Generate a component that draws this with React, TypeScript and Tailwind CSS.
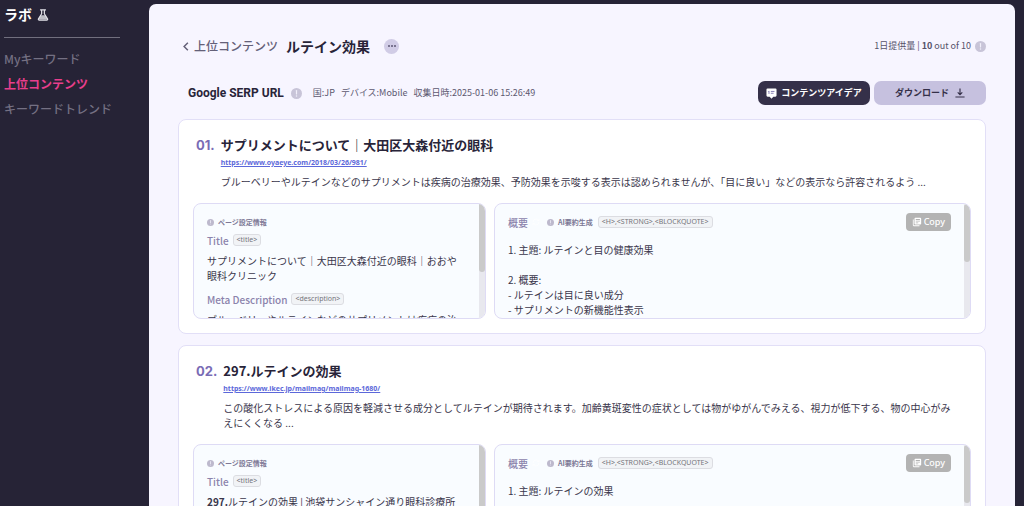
import { LuRefreshCw } from "react-icons/lu";
import { MdLibraryBooks } from "react-icons/md";

type Result = {
  rank: string;
  title: string;
  url: string;
  snippet: string;
  pageTitle: string;
  boldPrefix?: string;
  description: string;
  summary: string;
};

const results: Result[] = [
  {
    rank: "01.",
    title: "サプリメントについて｜大田区大森付近の眼科",
    url: "https://www.oyaeye.com/2018/03/26/981/",
    snippet:
      "ブルーベリーやルテインなどのサプリメントは疾病の治療効果、予防効果を示唆する表示は認められませんが、「目に良い」などの表示なら許容されるよう ...",
    pageTitle: "サプリメントについて｜大田区大森付近の眼科｜おおや眼科クリニック",
    description: "ブルーベリーやルテインなどのサプリメントは疾病の治療効果",
    summary:
      "1. 主題: ルテインと目の健康効果\n\n2. 概要:\n- ルテインは目に良い成分\n- サプリメントの新機能性表示",
  },
  {
    rank: "02.",
    title: "297.ルテインの効果",
    url: "https://www.ikec.jp/mailmag/mailmag-1680/",
    snippet:
      "この酸化ストレスによる原因を軽減させる成分としてルテインが期待されます。加齢黄斑変性の症状としては物がゆがんでみえる、視力が低下する、物の中心がみえにくくなる ...",
    boldPrefix: "297.",
    pageTitle: "ルテインの効果 | 池袋サンシャイン通り眼科診療所",
    description: "この酸化ストレスによる原因を軽減させる成分",
    summary: "1. 主題: ルテインの効果\n\n2. 概要:",
  },
];

function FlaskIcon() {
  return (
    <svg viewBox="0 0 24 24" className="size-3 text-[#e4e3ea]" fill="none" stroke="currentColor" aria-hidden="true">
      <path d="M7 1.8h10M9.300 2v7.500L3 19.500c-.8 1.600 0 2.700 1.600 2.700h14.800c1.600 0 2.400-1.100 1.600-2.700L14.700 9.500V2" strokeWidth="2.400" strokeLinecap="round" strokeLinejoin="round" />
      <path d="M7 12.500h10l4 8.500H3z" fill="currentColor" stroke="none" opacity="0.8" />
    </svg>
  );
}

function NoticeIcon({ className }: { className: string }) {
  return (
    <svg viewBox="0 0 24 24" className={className} aria-hidden="true">
      <circle cx="12" cy="12" r="12" fill="currentColor" />
      <path d="M12 5.500v7.500" stroke="#f1effa" strokeWidth="2.600" strokeLinecap="round" />
      <circle cx="12" cy="17.500" r="1.600" fill="#f1effa" />
    </svg>
  );
}

function IdeaIcon() {
  return (
    <svg viewBox="0 0 24 24" className="size-[11px] shrink-0" aria-hidden="true">
      <path d="M3.500 1h17A2.500 2.500 0 0 1 23 3.500v13a2.500 2.500 0 0 1-2.500 2.500H16l-4 4.500L8 19H3.500A2.500 2.500 0 0 1 1 16.500v-13A2.500 2.500 0 0 1 3.500 1z" fill="#fff" />
      <path d="M5 8l1.500-1.500V13M10.500 7.500h8M10.500 11.500h6" fill="none" stroke="#8078b0" strokeWidth="2" />
    </svg>
  );
}

function DownloadIcon() {
  return (
    <svg viewBox="0 0 24 24" className="size-[10px] shrink-0" fill="none" stroke="currentColor" strokeWidth="2.800" aria-hidden="true">
      <path d="M12 1v15M6.500 10.500l5.500 5.500 5.500-5.500M1 21.500h22" />
    </svg>
  );
}

function Tag({ children }: { children: string }) {
  return (
    <code className="rounded-[3px] border border-[#dcdde2] bg-[#f1f3f6] px-[3px] font-['Noto_Sans',sans-serif] text-[7px] leading-[10px] text-[#75757c]">
      {children}
    </code>
  );
}

function ScrollTrack({ long }: { long?: boolean }) {
  return (
    <div className="w-[6px] shrink-0 bg-[#e8e8ee]" aria-hidden="true">
      <div className={long ? "h-[68px] rounded-b-[3px] bg-[#cacaca]" : "h-[58px] rounded-[3px] bg-[#cacaca]"} />
    </div>
  );
}

function ResultCard({ item }: { item: Result }) {
  return (
    <article className="rounded-[8px] border border-[#e2dff7] bg-white p-[14px]">
      <div className="flex gap-[6px] pr-3 pl-[3px]">
        <span className="font-[Inter,sans-serif] text-[13px] leading-[22px] font-bold text-[#7a6cb5]">{item.rank}</span>
        <div className="min-w-0 flex-1">
          <h2 className="text-[13px] leading-[22px] font-bold text-[#282439]">{item.title}</h2>
          <a href={item.url} className="block w-fit font-['Noto_Sans',sans-serif] text-[7px] leading-[14px] font-bold text-[#5c68da] underline">
            {item.url}
          </a>
          <p className="mt-1 text-[10px] leading-[15px] text-[#3a364b]">{item.snippet}</p>
        </div>
      </div>
      <div className="mt-[14px] grid grid-cols-[293fr_477fr] gap-2">
        <section className="flex h-[116px] overflow-hidden rounded-[8px] border border-[#dedbf5] bg-[#f9fcff]">
          <div className="min-w-0 flex-1 px-[13px] pt-[11px]">
            <div className="flex h-[14px] items-center gap-1 text-[7px] font-bold text-[#7d7896]">
              <NoticeIcon className="size-[7px] text-[#bdb9cd]" />
              ページ設定情報
            </div>
            <div className="mt-[2px] flex h-[18px] items-center gap-1 text-[10px] text-[#8b83ac]">
              <h3 className="font-medium">Title</h3>
              <Tag>{"<title>"}</Tag>
            </div>
            <p className="mt-1 text-[10px] leading-[15px] text-[#3a364b]">
              {item.boldPrefix && <b>{item.boldPrefix}</b>}
              {item.pageTitle}
            </p>
            <div className="mt-[7px] flex h-[18px] items-center gap-1 text-[10px] text-[#8b83ac]">
              <h3 className="font-medium">Meta Description</h3>
              <Tag>{"<description>"}</Tag>
            </div>
            <p className="mt-1 text-[10px] leading-[15px] text-[#3a364b]">{item.description}</p>
          </div>
          <ScrollTrack long />
        </section>
        <section className="flex h-[116px] overflow-hidden rounded-[8px] border border-[#dedbf5] bg-[#f9fcff]">
          <div className="min-w-0 flex-1 px-[13px] pt-[9px]">
            <div className="flex h-[18px] items-center">
              <h3 className="text-[10px] font-medium text-[#8b83ac]">概要</h3>
              <LuRefreshCw className="ml-1 size-2 text-white" aria-hidden="true" />
              <NoticeIcon className="mr-1 ml-[7px] size-[7px] text-[#bdb9cd]" />
              <span className="mr-[5px] text-[7px] font-bold text-[#7d7896]">AI要約生成</span>
              <Tag>{"<H>,<STRONG>,<BLOCKQUOTE>"}</Tag>
              <button type="button" className="ml-auto flex h-[18px] items-center gap-[2px] rounded-[4px] bg-[#b3b3b3] px-[6px] font-['Noto_Sans',sans-serif] text-[9px] font-medium text-white">
                <MdLibraryBooks className="size-[10px]" aria-hidden="true" />
                Copy
              </button>
            </div>
            <p className="mt-[11px] text-[10px] leading-[15px] whitespace-pre-line text-[#3a364b]">{item.summary}</p>
          </div>
          <ScrollTrack />
        </section>
      </div>
    </article>
  );
}

export default function App() {
  return (
    <div className="flex h-screen overflow-hidden bg-[#262336] pr-[9px] font-['Noto_Sans_CJK_JP',sans-serif]">
      <aside className="w-[149px] shrink-0 pr-[29px] pl-1">
        <h1 className="flex h-[37px] items-center gap-[5px] pb-[8px] text-[14px] font-bold text-white">
          ラボ <FlaskIcon />
        </h1>
        <nav className="flex flex-col border-t border-[#716f7e] pt-2 text-[12px] leading-[25px] font-medium text-[#747083]">
          <a href="#keywords">Myキーワード</a>
          <a href="#contents" aria-current="page" className="font-bold text-[#e83e8c]">上位コンテンツ</a>
          <a href="#trends">キーワードトレンド</a>
        </nav>
      </aside>
      <main className="mt-1 min-w-0 flex-1 overflow-hidden rounded-t-[7px] bg-[#f7f5ff] px-[29px]">
        <header className="mt-[30px] flex h-6 items-center pl-1">
          <a href="#contents" className="flex items-center gap-1 text-[12px] font-medium text-[#646078]">
            <svg viewBox="0 0 8 12" className="h-[9px] w-2" fill="none" stroke="currentColor" strokeWidth="2" aria-hidden="true">
              <path d="M6.500 1L1.500 6l5 5" />
            </svg>
            上位コンテンツ
          </a>
          <h2 className="ml-2 text-[14px] font-bold text-[#282439]">ルテイン効果</h2>
          <button type="button" aria-label="その他" className="ml-[14px] flex size-[15px] items-center justify-center gap-px rounded-full bg-[#d1cce6]">
            <i className="size-[2px] rounded-full bg-[#5c5774]" />
            <i className="size-[2px] rounded-full bg-[#5c5774]" />
            <i className="size-[2px] rounded-full bg-[#5c5774]" />
          </button>
          <div className="ml-auto flex items-center gap-1 text-[9px] text-[#56526a]">
            <span>1日提供量 | <b>10</b> out of 10</span>
            <NoticeIcon className="size-[11px] text-[#c8c4d8]" />
          </div>
        </header>
        <div className="mt-[23px] flex h-6 items-center pl-[10px]">
          <h3 className="font-[Roboto,sans-serif] text-[12px] font-bold text-[#282439]">Google SERP URL</h3>
          <NoticeIcon className="ml-[7px] size-[11px] text-[#c8c4d8]" />
          <div className="ml-[11px] flex gap-[6px] text-[9px] text-[#5c5870]">
            <span>国:JP</span>
            <span>デバイス:Mobile</span>
            <span>収集日時:2025-01-06 15:26:49</span>
          </div>
          <div className="ml-auto flex gap-1 text-[9px] font-bold">
            <button type="button" className="flex h-6 w-28 items-center justify-center gap-1 rounded-[7px] bg-[#353049] text-white">
              <IdeaIcon />
              コンテンツアイデア
            </button>
            <button type="button" className="flex h-6 w-28 items-center justify-center gap-[6px] rounded-[7px] bg-[#c6c1df] text-[#353049]">
              ダウンロード
              <DownloadIcon />
            </button>
          </div>
        </div>
        <div className="mt-[14px] flex flex-col gap-[11px]">
          {results.map((item) => (
            <ResultCard key={item.rank} item={item} />
          ))}
        </div>
      </main>
    </div>
  );
}
